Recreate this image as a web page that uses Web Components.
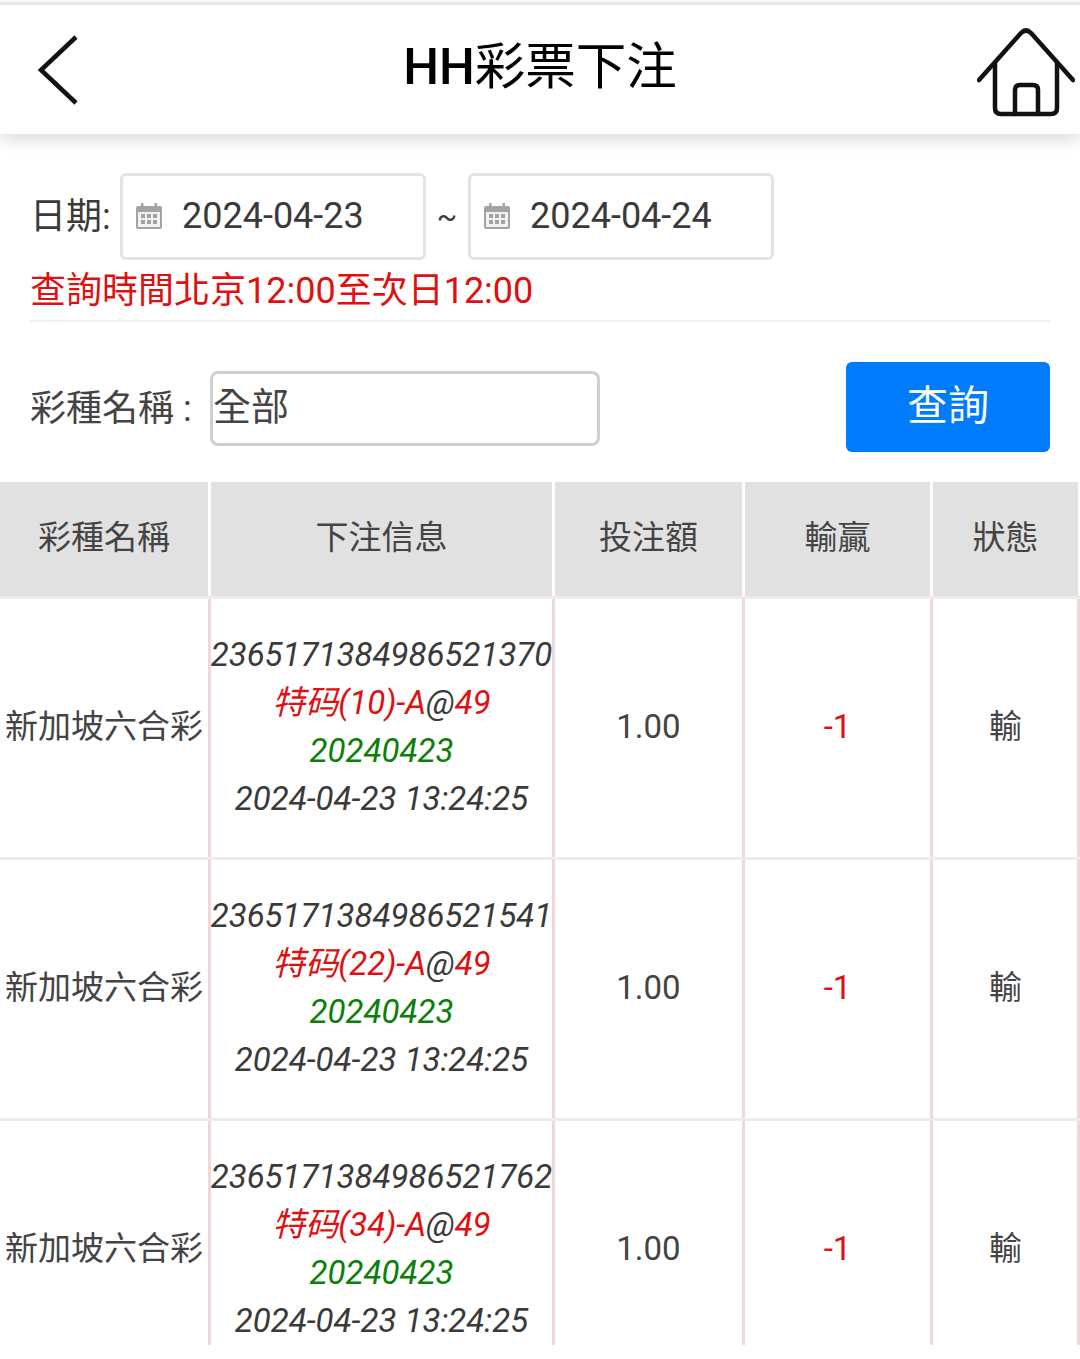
<!DOCTYPE html>
<html lang="zh-Hant">
<head>
<meta charset="utf-8">
<title>HH彩票下注</title>
<style>
  html, body {
    margin: 0;
    background: #fff;
    font-family: Roboto, "Noto Sans CJK TC", sans-serif;
    color: #333;
  }
</style>
</head>
<body>
<app-header><b>HH</b>彩票下注</app-header>
<date-filter from="2024-04-23" to="2024-04-24" note="查詢時間北京12:00至次日12:00"></date-filter>
<lottery-search label="彩種名稱 :" value="全部" action="查詢"></lottery-search>
<bet-table>
  <bet-row lottery="新加坡六合彩" order-no="2365171384986521370" pick="特码(10)-A" odds="49" period="20240423" time="2024-04-23 13:24:25" amount="1.00" profit="-1" status="輸"></bet-row>
  <bet-row lottery="新加坡六合彩" order-no="2365171384986521541" pick="特码(22)-A" odds="49" period="20240423" time="2024-04-23 13:24:25" amount="1.00" profit="-1" status="輸"></bet-row>
  <bet-row lottery="新加坡六合彩" order-no="2365171384986521762" pick="特码(34)-A" odds="49" period="20240423" time="2024-04-23 13:24:25" amount="1.00" profit="-1" status="輸"></bet-row>
</bet-table>

<script>
class AppHeader extends HTMLElement {
  connectedCallback() {
    this.attachShadow({ mode: "open" });
    this.shadowRoot.innerHTML = `
      <style>
        :host {
          display: grid;
          grid-template-columns: 1fr auto 1fr;
          align-items: center;
          height: 129px;
          margin-top: 2px;
          border-top: 3px solid #e6e6e4;
          padding: 0 5px;
          background: #fff;
          box-shadow: 0 6px 16px rgba(0, 0, 0, 0.14);
          position: relative;
        }
        h1 {
          margin: 0 0 5px;
          font-size: 50.500px;
          font-weight: 400;
          color: #000;
          line-height: 1;
        }
        ::slotted(b) { font-weight: 500; }
        svg { display: block; fill: none; stroke: #111; }
        .back { margin: 1px 0 0 33px; }
        .home { justify-self: end; margin-top: 5px; }
      </style>
      <svg class="back" width="42" height="70" viewBox="0 0 42 70" stroke-width="4.500">
        <path d="M38 2 L3 35 L38 68"/>
      </svg>
      <h1><slot></slot></h1>
      <svg class="home" width="98" height="92" viewBox="0 0 98 92" stroke-width="4.500" stroke-linecap="round" stroke-linejoin="round">
        <path d="M2 54 L44 7 Q49 2 54 7 L96 54"/>
        <path d="M18 37 V82 Q18 88 24 88 H74 Q80 88 80 82 V37"/>
        <path d="M38 88 V64 Q38 59 43 59 H56 Q61 59 61 64 V88"/>
      </svg>`;
  }
}

class DateBox extends HTMLElement {
  connectedCallback() {
    this.attachShadow({ mode: "open" });
    this.shadowRoot.innerHTML = `
      <style>
        :host {
          display: flex;
          align-items: center;
          gap: 20px;
          width: 306px;
          height: 87px;
          box-sizing: border-box;
          padding-left: 13px;
          border: 3px solid #e4e4e4;
          border-radius: 6px;
          font-size: 36px;
          color: #3a3a3a;
        }
        svg { display: block; flex: none; margin-bottom: 2px; }
        span { margin-bottom: 2px; }
      </style>
      <svg width="26" height="26" viewBox="0 0 26 26">
        <rect x="0" y="3" width="26" height="23" rx="2" fill="#a3a3a3"/>
        <rect x="5" y="0" width="2.500" height="5" fill="#a3a3a3"/>
        <rect x="18.500" y="0" width="2.500" height="5" fill="#a3a3a3"/>
        <rect x="2" y="9" width="22" height="15" fill="#f2f2f2"/>
        <g fill="#a3a3a3">
          <rect x="5" y="11" width="4" height="4"/><rect x="11" y="11" width="4" height="4"/><rect x="17" y="11" width="4" height="4"/>
          <rect x="5" y="17" width="4" height="4"/><rect x="11" y="17" width="4" height="4"/><rect x="17" y="17" width="4" height="4"/>
        </g>
      </svg>
      <span><slot></slot></span>`;
  }
}

class DateFilter extends HTMLElement {
  connectedCallback() {
    this.attachShadow({ mode: "open" });
    this.shadowRoot.innerHTML = `
      <style>
        :host {
          display: block;
          margin: 39px 30px 0;
          padding-bottom: 7px;
          border-bottom: 2px solid #efefef;
        }
        .dates {
          display: flex;
          align-items: center;
          font-size: 36px;
          color: #3a3a3a;
        }
        .label { width: 90px; padding-bottom: 8px; box-sizing: border-box; white-space: nowrap; }
        .sep { width: 42px; text-align: center; font-size: 30px; }
        p {
          margin: 9px 0 0;
          font-size: 36px;
          line-height: 44px;
          color: #e01010;
        }
      </style>
      <div class="dates">
        <span class="label">日期:</span>
        <date-box>${this.getAttribute("from")}</date-box>
        <span class="sep">~</span>
        <date-box>${this.getAttribute("to")}</date-box>
      </div>
      <p>${this.getAttribute("note")}</p>`;
  }
}

class LotterySearch extends HTMLElement {
  connectedCallback() {
    this.attachShadow({ mode: "open" });
    this.shadowRoot.innerHTML = `
      <style>
        :host {
          display: flex;
          align-items: center;
          margin: 40px 30px 30px;
          height: 90px;
          color: #444;
        }
        .label { width: 180px; font-size: 36px; white-space: nowrap; padding-bottom: 4px; }
        .select {
          width: 390px;
          height: 75px;
          box-sizing: border-box;
          margin-top: 3px;
          border: 3px solid #cfcfcf;
          border-radius: 8px;
          font-size: 38px;
          line-height: 66px;
        }
        button {
          margin-left: auto;
          width: 204px;
          height: 90px;
          border: 0;
          border-radius: 6px;
          padding: 0 0 10px;
          background: #007bfb;
          color: #fff;
          font: inherit;
          font-size: 41px;
        }
      </style>
      <span class="label">${this.getAttribute("label")}</span>
      <div class="select">${this.getAttribute("value")}</div>
      <button type="button">${this.getAttribute("action")}</button>`;
  }
}

const COLUMNS = "208px 341px 187px 185px 145px";

class BetTable extends HTMLElement {
  connectedCallback() {
    this.attachShadow({ mode: "open" });
    this.shadowRoot.innerHTML = `
      <style>
        :host {
          display: block;
          height: 863px;
          overflow: hidden;
        }
        .head {
          display: grid;
          grid-template-columns: ${COLUMNS};
          column-gap: 3px;
          height: 114px;
          border-bottom: 3px solid #ececec;
        }
        .head div {
          display: flex;
          align-items: center;
          justify-content: center;
          padding-bottom: 8px;
          background: #e1e1e1;
          font-size: 33px;
          color: #444;
        }
      </style>
      <div class="head">
        <div>彩種名稱</div><div>下注信息</div><div>投注額</div><div>輸贏</div><div>狀態</div>
      </div>
      <slot></slot>`;
  }
}

class BetRow extends HTMLElement {
  connectedCallback() {
    const a = (name) => this.getAttribute(name);
    this.attachShadow({ mode: "open" });
    this.shadowRoot.innerHTML = `
      <style>
        :host {
          display: grid;
          grid-template-columns: ${COLUMNS};
          column-gap: 3px;
          height: 258px;
          border-bottom: 3px solid #ececec;
          background: linear-gradient(#f0d8da, #f0d8da) 208px 0 / 3px 100% no-repeat,
            linear-gradient(#f0d8da, #f0d8da) 552px 0 / 3px 100% no-repeat,
            linear-gradient(#f0d8da, #f0d8da) 742px 0 / 3px 100% no-repeat,
            linear-gradient(#f0d8da, #f0d8da) 930px 0 / 3px 100% no-repeat,
            linear-gradient(#f0d8da, #f0d8da) 1077px 0 / 3px 100% no-repeat;
          font-size: 33px;
          color: #444;
        }
        .cell {
          display: flex;
          align-items: center;
          justify-content: center;
          white-space: nowrap;
        }
        .cjk { padding-bottom: 8px; }
        .num { padding-bottom: 4px; }
        .info {
          flex-direction: column;
          font-style: italic;
          line-height: 48px;
          color: #3a3a3a;
          padding-bottom: 2px;
        }
        .red { color: #e01010; }
        .green { color: #0a800a; }
        .profit { color: #e01010; }
      </style>
      <div class="cell cjk">${a("lottery")}</div>
      <div class="cell info">
        <span>${a("order-no")}</span>
        <span><span class="red">${a("pick")}</span>@<span class="red">${a("odds")}</span></span>
        <span class="green">${a("period")}</span>
        <span>${a("time")}</span>
      </div>
      <div class="cell num">${a("amount")}</div>
      <div class="cell num profit">${a("profit")}</div>
      <div class="cell cjk">${a("status")}</div>`;
  }
}

customElements.define("app-header", AppHeader);
customElements.define("date-box", DateBox);
customElements.define("date-filter", DateFilter);
customElements.define("lottery-search", LotterySearch);
customElements.define("bet-table", BetTable);
customElements.define("bet-row", BetRow);
</script>
</body>
</html>
